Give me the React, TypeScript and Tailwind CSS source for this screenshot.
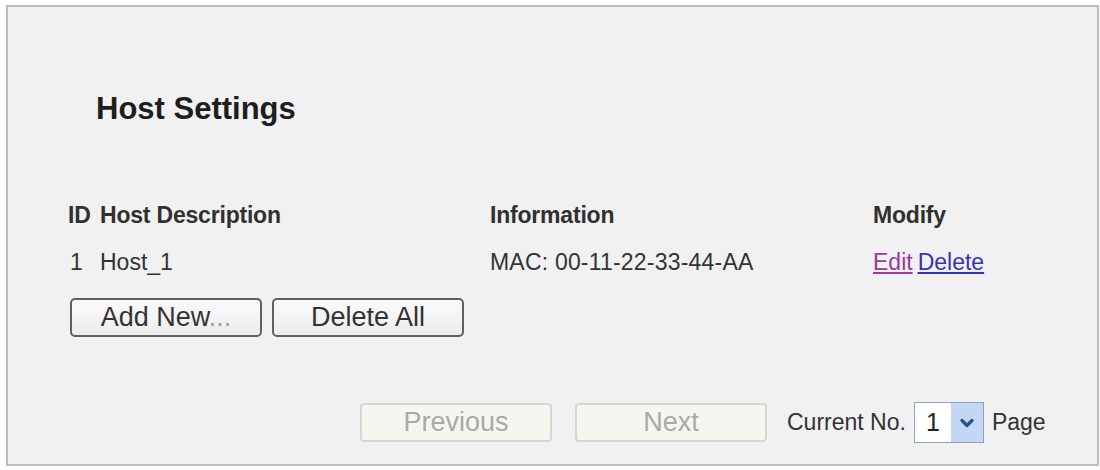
import { ChevronDown } from 'lucide-react';

type Host = {
  id: number;
  description: string;
  info: string;
};

const hosts: Host[] = [{ id: 1, description: 'Host_1', info: 'MAC: 00-11-22-33-44-AA' }];

function FormButton({ children, disabled }: { children: React.ReactNode; disabled?: boolean }) {
  return (
    <button
      type="button"
      disabled={disabled}
      className={
        disabled
          ? 'w-[192px] h-[39px] rounded-[4px] border-2 border-[#d6d6d2] bg-[#f6f6f0] text-[#a9a9a9] text-[27px] leading-none'
          : 'w-[192px] h-[39px] rounded-[5px] border-2 border-[#5d6166] bg-gradient-to-b from-[#fbfbfb] to-[#ececec] text-[#333] text-[27px] leading-none'
      }
    >
      {children}
    </button>
  );
}

export default function App() {
  return (
    <div className="bg-white w-[1100px] h-[470px] pt-[5px] pl-[6px] font-['Liberation_Sans',Arial,sans-serif]">
      <div className="w-[1093px] h-[461px] border-2 border-[#bdbdbd] bg-[#f1f1f1] text-[#2b2b2b]">
        <h1 className="pt-[84px] pl-[88px] text-[31px] leading-[36px] font-bold text-[#1e1e1e]">
          Host Settings
        </h1>

        <div className="pl-[60px] mt-[74px] text-[23px] leading-[28px]">
          <div className="grid grid-cols-[32px_390px_383px_1fr] font-bold text-[#303030] tracking-[-0.2px]">
            <span>ID</span>
            <span>Host Description</span>
            <span>Information</span>
            <span>Modify</span>
          </div>

          {hosts.map((host) => (
            <div key={host.id} className="grid grid-cols-[32px_390px_383px_1fr] mt-[19px] text-[#333]">
              <span className="pl-[2px]">{host.id}</span>
              <span>{host.description}</span>
              <span className="tracking-[0.2px]">{host.info}</span>
              <span className="flex gap-[5px]">
                <a href="#" className="underline text-[#9a3a9e]">Edit</a>
                <a href="#" className="underline text-[#3434b8]">Delete</a>
              </span>
            </div>
          ))}

          <div className="flex gap-[10px] mt-[22px] pl-[2px]">
            <FormButton>
              Add New<span className="text-[#a0a0a0]">...</span>
            </FormButton>
            <FormButton>Delete All</FormButton>
          </div>
        </div>

        <div className="flex items-center mt-[65px] pl-[352px] text-[23px] text-[#333]">
          <FormButton disabled>Previous</FormButton>
          <div className="ml-[23px]">
            <FormButton disabled>Next</FormButton>
          </div>
          <span className="ml-[20px]">Current No.</span>
          <div className="ml-[8px] flex h-[41px] w-[70px] border border-[#8aa2c0] bg-white">
            <span className="flex-1 flex items-center justify-center text-[25px] text-[#222]">1</span>
            <span className="w-[32px] flex items-center justify-center bg-[#c3d6f3]">
              <ChevronDown size={20} strokeWidth={4} className="text-[#2d4f8f]" />
            </span>
          </div>
          <span className="ml-[8px] whitespace-nowrap">Page</span>
        </div>
      </div>
    </div>
  );
}
